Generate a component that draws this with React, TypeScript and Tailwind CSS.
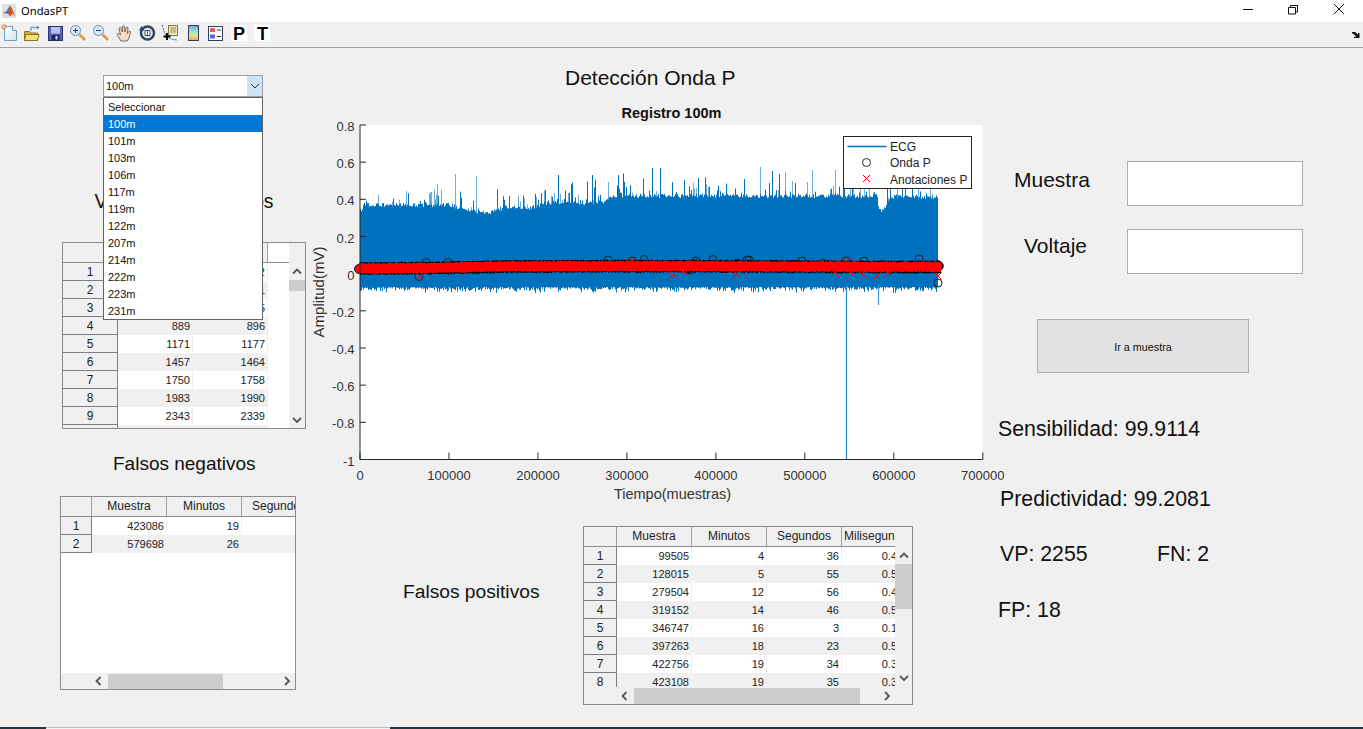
import React from "react";

const rnd = (() => {
  let s = 12345;
  return () => {
    s = (s * 1664525 + 1013904223) >>> 0;
    return s / 4294967296;
  };
})();

const X0 = 360, X1 = 982.8, Y0 = 125, Y1 = 459.5;
const px = (v: number) => X0 + (v / 700000) * (X1 - X0);
const py = (v: number) => Y0 + ((0.8 - v) / 1.8) * (Y1 - Y0);

const TOP_POINTS: [number, number][] = [
  [360, 214], [363, 207], [450, 207], [468, 214], [488, 215], [505, 209], [530, 210], [545, 205], [600, 205], [615, 198],
  [876, 198], [879, 212], [883, 212], [888, 202], [895, 199], [938, 199],
];
const baseTop = (x: number) => {
  for (let i = 1; i < TOP_POINTS.length; i++) {
    const [x0, y0] = TOP_POINTS[i - 1];
    const [x1, y1] = TOP_POINTS[i];
    if (x <= x1) return y0 + ((x - x0) / (x1 - x0)) * (y1 - y0);
  }
  return 199;
};

function buildSignal() {
  let main = "";
  let light = "";
  for (let x = 360; x < 938; x += 1) {
    const b = baseTop(x);
    const top = b - rnd() * 4;
    main += `M${x + 0.5} 240V${top.toFixed(1)}`;
    if (rnd() < 0.32) {
      const h = Math.min(-Math.log(rnd()) * 8, 30);
      main += `M${x + 0.5} 240V${(b - h).toFixed(1)}`;
    } else if (rnd() < 0.12) {
      light += `M${x + 0.5} 240V${(b - 4 - rnd() * 14).toFixed(1)}`;
    }
    main += `M${x + 0.5} 284V${(287 + rnd() * rnd() * 7).toFixed(1)}`;
  }
  [[455, 174], [476, 176], [437, 184], [608, 182], [760, 167], [785, 172], [812, 170], [835, 170], [860, 168]].forEach(([x, y]) => {
    light += `M${x + 0.5} 220V${y}`;
  });
  return { main, light };
}
const { main, light } = buildSignal();

const bandY = (x: number) => 266.5 + 2 * Math.cos((x - 360) / 90) * (x < 520 ? 1 : 0.2);
function buildBand() {
  let red = "";
  let black = "";
  for (let x = 359; x <= 940; x += 1) {
    const c = bandY(x);
    black += `M${x + 0.5} ${(c - 5.5 - rnd() * 1.2).toFixed(1)}V${(c + 5.5 + rnd() * 1.4).toFixed(1)}`;
    red += `M${x + 0.5} ${(c - 4.5 - rnd() * 1.2).toFixed(1)}V${(c + 4.5 + rnd() * 1).toFixed(1)}`;
  }
  return { red, black };
}
const { red, black } = buildBand();

const circles: [number, number][] = [
  [419, 276.5], [426, 262.5], [448, 262.5], [477, 270], [608, 260], [632, 261], [644, 259.5], [690, 270], [696, 261],
  [713, 259.5], [737, 263], [747, 260], [749, 260], [802, 261], [823, 263], [846, 261], [864, 261], [919, 259], [938, 283],
];
const crosses: [number, number][] = [
  [419, 276.5], [632, 261], [673, 275], [683, 271], [736, 274], [835, 273], [846, 261], [850, 272], [862, 274], [877, 276], [888, 273], [938, 276],
];

function Chart() {
  const yt = [0.8, 0.6, 0.4, 0.2, 0, -0.2, -0.4, -0.6, -0.8, -1];
  const xt = [0, 100000, 200000, 300000, 400000, 500000, 600000, 700000];
  return (
    <svg width="690" height="400" viewBox="310 100 690 400" className="block overflow-visible" style={{ fontFamily: '"Liberation Sans", Arial, sans-serif' }}>
      <rect x={X0} y={Y0} width={X1 - X0} height={Y1 - Y0} fill="#fff" />
      <path d={light} stroke="#6aaedb" strokeWidth="1" fill="none" />
      <path d={main} stroke="#0072BD" strokeWidth="1" fill="none" />
      <rect x="360" y="215" width="578" height="72" fill="#0072BD" />
      <path d="M846.5 285V460" stroke="#2088d0" strokeWidth="1.2" />
      <path d="M878.5 285V305" stroke="#3a97d6" strokeWidth="1.2" />
      <path d={black} stroke="#000" strokeWidth="1" />
      {circles.map(([x, y], i) => (
        <circle key={i} cx={x} cy={y} r="4" fill="none" stroke="#10202c" strokeWidth="1" />
      ))}
      <circle cx="359" cy="269" r="4.5" fill="#ff0000" stroke="#10202c" />
      <circle cx="939" cy="266" r="4" fill="#ff0000" stroke="#000" strokeWidth="1.5" />
      <path d={red} stroke="#ff0000" strokeWidth="1" />
      {crosses.map(([x, y], i) => (
        <path key={i} d={`M${x - 3.5} ${y - 3.5}l7 7m0 -7l-7 7`} stroke="#ff0000" strokeWidth="1" />
      ))}
      <path d={`M${X0} ${Y0}V${Y1}H${X1}`} stroke="#262626" strokeWidth="1" fill="none" />
      {yt.map((v) => (
        <g key={v}>
          <path d={`M${X0} ${py(v)}h6`} stroke="#262626" />
          <text x="354.5" y={py(v) + 6} textAnchor="end" fontSize="13" fill="#333">{v}</text>
        </g>
      ))}
      {xt.map((v) => (
        <g key={v}>
          <path d={`M${px(v)} ${Y1}v-7`} stroke="#262626" />
          <text x={px(v)} y="479.5" textAnchor="middle" fontSize="13" fill="#333">{v}</text>
        </g>
      ))}
      <text x="672.5" y="499" textAnchor="middle" fontSize="14.5" fill="#333">Tiempo(muestras)</text>
      <text transform="translate(324 292) rotate(-90)" textAnchor="middle" fontSize="15" fill="#333">Amplitud(mV)</text>
      <text x="671.5" y="118" textAnchor="middle" fontSize="14.5" fontWeight="700" fill="#111">Registro 100m</text>
      <rect x="843.5" y="136.5" width="128" height="52" fill="#fff" stroke="#262626" />
      <path d="M847.5 146.5h39" stroke="#0072BD" strokeWidth="1.5" />
      <circle cx="866.5" cy="162.5" r="4" fill="none" stroke="#222" />
      <path d="M863 175l7 7m0 -7l-7 7" stroke="#ff0000" />
      <text x="890" y="151" fontSize="12" fill="#222">ECG</text>
      <text x="890" y="167" fontSize="12" fill="#222">Onda P</text>
      <text x="890" y="184" fontSize="12" fill="#222">Anotaciones P</text>
    </svg>
  );
}

function ToolbarIcons() {
  return (
    <svg width="280" height="25" viewBox="0 0 280 25" className="block">
      <defs>
        <linearGradient id="cb" x1="0" y1="0" x2="0" y2="1">
          <stop offset="0" stopColor="#7f9be0" />
          <stop offset="0.35" stopColor="#8fe0d0" />
          <stop offset="0.65" stopColor="#e0e89a" />
          <stop offset="1" stopColor="#f0a060" />
        </linearGradient>
        <linearGradient id="pg" x1="0" y1="0" x2="1" y2="1">
          <stop offset="0" stopColor="#ffffff" />
          <stop offset="1" stopColor="#d4e4f4" />
        </linearGradient>
      </defs>
      {/* new */}
      <path d="M4.5 4.5h8l4 4v10h-12z" fill="url(#pg)" stroke="#6f9fc0" />
      <path d="M12.5 4.5v4h4" fill="#eef5fb" stroke="#6f9fc0" />
      <circle cx="4" cy="5" r="2.2" fill="#f0c080" stroke="#e07840" strokeWidth="0.8" />
      {/* open */}
      <path d="M31 9v-3.5h6" fill="none" stroke="#7f9fb8" strokeWidth="1.5" />
      <path d="M37 3.5l2.5 2-2.5 2z" fill="#5f7f98" />
      <path d="M24.5 9.5h5l1 1.5h7v7.5h-13z" fill="#d8b040" stroke="#8f7420" />
      <path d="M24.5 18.5l1.5-6h13l-1.5 6z" fill="#f6dd80" stroke="#8f7420" />
      {/* save */}
      <rect x="48.5" y="4.5" width="14" height="14" fill="#5a62b8" stroke="#2b3470" />
      <rect x="51" y="5" width="9" height="6.5" fill="#b8c0ec" />
      <rect x="51.5" y="13" width="8" height="5.5" fill="#20264f" />
      <rect x="55.5" y="14" width="2" height="3.5" fill="#d8dcf0" />
      {/* zoom in */}
      <circle cx="75.5" cy="8.5" r="5" fill="#d6ecfa" stroke="#6d8fa6" />
      <path d="M73 8.5h5M75.5 6v5" stroke="#23408a" />
      <path d="M79.5 12.5l5.5 5.5" stroke="#d79a3b" strokeWidth="2.5" />
      {/* zoom out */}
      <circle cx="98.5" cy="8.5" r="5" fill="#d6ecfa" stroke="#6d8fa6" />
      <path d="M96 8.5h5" stroke="#23408a" />
      <path d="M102.5 12.5l5.5 5.5" stroke="#d79a3b" strokeWidth="2.5" />
      {/* hand */}
      <path d="M121 19l-3.5-5.5c-1-2 .8-2.5 2-1.5l1 1-1.5-6c-.3-1.800 1.800-2 2.300-.3l1 3.300 0-5c0-1.600 2.200-1.600 2.300 0l.4 5 1-4c.5-1.500 2.200-1 2 .5l-.7 5 1.500-2c1-1 2.200 0 1.700 1l-1.500 5-1.500 3.500z" fill="#fbdcc0" stroke="#4a4a5a" strokeWidth="0.8" />
      {/* rotate */}
      <circle cx="147.5" cy="11" r="6.5" fill="#e8eef4" stroke="#33455c" strokeWidth="2.5" />
      <path d="M139 8.5l2.5-4.5 3 4.5z" fill="#33455c" />
      <path d="M145 8.5h5v5h-5z" fill="#fff" stroke="#33455c" />
      <path d="M147.5 8.5v5" stroke="#33455c" strokeWidth="0.8" />
      {/* data cursor */}
      <rect x="168.5" y="3.5" width="9" height="10" fill="#e9e6b4" stroke="#7d7d50" />
      <path d="M170 6h6M170 8h6M170 10h6" stroke="#6d6d50" strokeWidth="0.7" />
      <path d="M162 3l3 9 6 5 6 1" fill="none" stroke="#2020e0" strokeWidth="0.8" strokeDasharray="2 1" />
      <path d="M163.5 14.5h7M167 11v7" stroke="#000" strokeWidth="2" />
      {/* colorbar */}
      <rect x="188.5" y="3.5" width="10" height="15" fill="url(#cb)" stroke="#2f3f60" />
      {/* legend */}
      <rect x="208.5" y="4.5" width="14" height="14" fill="#fff" stroke="#2f3f60" />
      <rect x="210" y="6" width="5" height="4" fill="#e06060" />
      <rect x="210" y="12.5" width="5" height="4" fill="#6060e0" />
      <path d="M217 8h4M217 14.5h4" stroke="#333" />
      {/* P / T boxes */}
      <rect x="231" y="3" width="16" height="16" fill="#fff" />
      <rect x="254" y="3" width="16" height="16" fill="#fff" />
    </svg>
  );
}

function Table({
  head,
  rows,
  rowHeadW,
  lastPr = "",
}: {
  head: string[];
  rows: (string | number)[][];
  rowHeadW: string;
  lastPr?: string;
}) {
  return (
    <div className="h-full overflow-hidden bg-white">
      <div className="flex h-[20px] w-max min-w-full border-b border-[#8b8b90]">
        <div className={`${rowHeadW} shrink-0 bg-[#f0f0f0] border-r border-[#a0a0a0]`} />
        {head.map((h, i) => (
          <div key={i} className="w-[75px] shrink-0 bg-[#f0f0f0] text-center border-r border-[#a0a0a0] text-[12px] leading-[19px] whitespace-nowrap overflow-hidden text-[#222]">{h}</div>
        ))}
      </div>
      {rows.map((r, i) => (
        <div key={i} className="flex h-[18px]">
          <div className={`${rowHeadW} shrink-0 bg-[#f0f0f0] border-r border-b border-[#7b7f87] text-center text-[12px] leading-[18px] text-[#222]`}>{i + 1}</div>
          {r.map((c, j) => (
            <div
              key={j}
              className={`w-[75px] shrink-0 text-right leading-[18px] overflow-hidden whitespace-nowrap border-r border-[#f0f0f0] text-[#222] ${i % 2 ? "bg-[#f0f0f0]" : "bg-white"} ${j === r.length - 1 && lastPr ? lastPr : "pr-[2px]"}`}
            >
              {c}
            </div>
          ))}
        </div>
      ))}
    </div>
  );
}

const Chevron = ({ dir, thin }: { dir: "up" | "down" | "left" | "right"; thin?: boolean }) => {
  const d = { up: "M1 6.5l4-4 4 4", down: "M1 3l4 4 4-4", left: "M6.5 1L2.5 5l4 4", right: "M3 1l4 4-4 4" }[dir];
  return (
    <svg width="10" height="10" viewBox="0 0 10 10" className="shrink-0 block">
      <path d={d} fill="none" stroke={thin ? "#333" : "#555"} strokeWidth={thin ? 1 : 1.8} />
    </svg>
  );
};

function Left() {
  const items = ["100m", "101m", "103m", "106m", "117m", "119m", "122m", "207m", "214m", "222m", "223m", "231m"];
  return (
    <div className="w-[310px] shrink-0 relative">
      <div className="ml-[103px] mt-[27px] w-[160px] h-[22px] bg-white border border-[#a0a0a0] flex items-center justify-between text-[11px] pl-[2px]">
        <span className="text-[#111]">100m</span>
        <span className="w-[15px] h-[20px] bg-[#cde4f7] flex items-center justify-center"><Chevron dir="down" thin /></span>
      </div>
      <div className="absolute left-[103px] top-[49px] w-[160px] h-[223px] bg-white border border-[#646464] text-[11px] z-10 text-[#111]">
        <div className="h-[17px] leading-[18px] pl-[4px]">Seleccionar</div>
        {items.map((t, i) => (
          <div key={t} className={`h-[17px] leading-[18px] pl-[4px] ${i === 0 ? "bg-[#0078d7] text-white" : ""}`}>{t}</div>
        ))}
      </div>

      <div className="mt-[94px] text-center w-[368px] text-[19.3px] leading-[21px] text-[#111] whitespace-nowrap">Verdaderos positivos</div>

      <div className="ml-[62px] mt-[30px] w-[244px] h-[187px] border border-[#8b8b90] bg-[#f0f0f0] flex text-[11px]">
        <div className="w-[226px] shrink-0 h-full">
          <Table
            head={["Muestra", "Minutos"]}
            rows={[[77, 82], [370, 371], [662, 665], [889, 896], [1171, 1177], [1457, 1464], [1750, 1758], [1983, 1990], [2343, 2339], ["", ""]]}
            rowHeadW="w-[55px]"
          />
        </div>
        <div className="w-[16px] flex flex-col items-center pt-[24px] pb-[3px] h-full">
          <Chevron dir="up" />
          <div className="mt-[3px] w-full h-[11px] bg-[#cdcdcd]" />
          <div className="flex-1" />
          <Chevron dir="down" />
        </div>
      </div>

      <div className="ml-[113px] mt-[24px] text-[19px] leading-[21px] text-[#111]">Falsos negativos</div>

      <div className="ml-[60px] mt-[22px] w-[236px] h-[194px] border border-[#8b8b90] bg-white flex flex-col text-[11px]">
        <div className="flex-1 min-h-0">
          <Table
            head={["Muestra", "Minutos", "Segundos"]}
            rows={[[423086, 19, ""], [579698, 26, ""]]}
            rowHeadW="w-[31px]"
          />
        </div>
        <div className="h-[16px] shrink-0 bg-[#f0f0f0] flex items-center">
          <span className="ml-[33px]"><Chevron dir="left" /></span>
          <div className="ml-[4px] h-[15px] w-[115px] bg-[#cdcdcd]" />
          <div className="flex-1" />
          <span className="mr-[3px]"><Chevron dir="right" /></span>
        </div>
      </div>
    </div>
  );
}

function Middle() {
  const rows: (string | number)[][] = [
    [99505, 4, 36, "0.4"],
    [128015, 5, 55, "0.5"],
    [279504, 12, 56, "0.4"],
    [319152, 14, 46, "0.5"],
    [346747, 16, 3, "0.1"],
    [397263, 18, 23, "0.5"],
    [422756, 19, 34, "0.3"],
    [423108, 19, 35, "0.3"],
  ];
  return (
    <div className="w-[690px] shrink-0">
      <div className="ml-[255px] mt-[18px] text-[21px] leading-[24px] text-[#111]">Detección Onda P</div>
      <div className="h-[400px] mt-[10px]"><Chart /></div>
      <div className="flex items-start">
        <div className="ml-[93px] mt-[81px] w-[180px] text-[19.2px] leading-[21px] text-[#111] whitespace-nowrap">Falsos positivos</div>
        <div className="w-[330px] h-[179px] border border-[#8b8b90] bg-[#f0f0f0] mt-[26px] flex flex-col text-[11px]">
          <div className="flex h-[160px] shrink-0">
            <div className="w-[311px] shrink-0">
              <Table
                head={["Muestra", "Minutos", "Segundos", "Milisegundos"]}
                rows={rows}
                rowHeadW="w-[33px]"
                lastPr="pr-[19px]"
              />
            </div>
            <div className="w-[17px] flex flex-col items-center pt-[24px] pb-[4px]">
              <Chevron dir="up" />
              <div className="mt-[3px] w-full h-[45px] bg-[#cdcdcd]" />
              <div className="flex-1" />
              <Chevron dir="down" />
            </div>
          </div>
          <div className="flex-1 flex items-center">
            <span className="ml-[36px]"><Chevron dir="left" /></span>
            <div className="ml-[4px] h-[16px] w-[226px] bg-[#cdcdcd]" />
            <span className="ml-[22px]"><Chevron dir="right" /></span>
          </div>
        </div>
      </div>
    </div>
  );
}

function Right() {
  return (
    <div className="flex-1 text-[#111] -ml-[2px]">
      <div className="flex items-center mt-[113px]">
        <div className="ml-[16px] w-[113px] text-[21px] leading-[24px] mb-[8px]">Muestra</div>
        <div className="w-[176px] h-[45px] bg-white border border-[#adadad]" />
      </div>
      <div className="flex items-center mt-[23px]">
        <div className="ml-[26px] w-[103px] text-[21px] leading-[24px] mb-[12px]">Voltaje</div>
        <div className="w-[176px] h-[45px] bg-white border border-[#adadad]" />
      </div>
      <div className="ml-[39px] mt-[45px] w-[212px] h-[54px] bg-[#e1e1e1] border border-[#adadad] flex items-center justify-center text-[10.8px] pt-[2px] text-[#111]">Ir a muestra</div>
      <div className="mt-[44px] text-[21.3px] leading-[24px]">Sensibilidad: 99.9114</div>
      <div className="ml-[2px] mt-[46px] text-[21.3px] leading-[24px]">Predictividad: 99.2081</div>
      <div className="ml-[2px] mt-[31px] text-[21.3px] leading-[24px] flex">
        <span className="w-[157px]">VP: 2255</span>
        <span>FN: 2</span>
      </div>
      <div className="mt-[32px] text-[21.3px] leading-[24px]">FP: 18</div>
    </div>
  );
}

export default function App() {
  return (
    <div className="w-[1363px] h-[729px] overflow-hidden bg-[#f0f0f0] flex flex-col" style={{ fontFamily: '"Liberation Sans", Arial, sans-serif' }}>
      <div className="h-[22px] bg-white flex items-center shrink-0">
        <svg width="14" height="14" viewBox="0 0 14 14" className="ml-[2px]">
          <rect width="14" height="14" fill="#d8e0ea" />
          <path d="M1 9l3.5-1.5L8 1.5l2 3 3 7.5-2.5-2.5L8 12.5 6 9.5z" fill="#d9501e" />
          <path d="M1 9l3.5-1.5L8 1.5 6 9.5z" fill="#3a7fb5" />
        </svg>
        <span className="ml-[5px] text-[11.2px] text-black" style={{ fontFamily: '"Noto Sans", sans-serif' }}>OndasPT</span>
        <div className="ml-auto flex items-center h-full">
          <svg width="140" height="22" viewBox="0 0 140 22" className="block">
            <path d="M20 9.5h10" stroke="#111" />
            <path d="M65.5 7.5h7v6.5h-7zM67.5 7.5v-2h7v6.5h-2" fill="none" stroke="#111" />
            <path d="M111 4l10 10m0-10l-10 10" stroke="#111" />
          </svg>
        </div>
      </div>
      <div className="h-[26px] shrink-0 border-b border-[#a0a0a0] bg-[#f0f0f0] flex items-start relative">
        <div className="relative w-[280px] h-[25px] shrink-0">
          <ToolbarIcons />
          <span className="absolute left-[233px] top-[3px] text-[18px] leading-[18px] font-bold text-black">P</span>
          <span className="absolute left-[257px] top-[3px] text-[18px] leading-[18px] font-bold text-black">T</span>
        </div>
        <svg width="8" height="6" viewBox="0 0 8 6" className="ml-auto mr-[3px] mt-[10px]">
          <path d="M0 0h3l3 2.5V1h1.5v5H2V4.800h2.500L1 1.500H0z" fill="#111" />
        </svg>
      </div>
      <div className="flex-1 flex min-h-0">
        <Left />
        <Middle />
        <Right />
      </div>
      <div className="h-[2px] shrink-0 flex bg-[#25343f]">
        <div className="ml-[46px] w-[344px] bg-[#f4f4f4] border-t border-[#bbbbbb]" />
      </div>
    </div>
  );
}
